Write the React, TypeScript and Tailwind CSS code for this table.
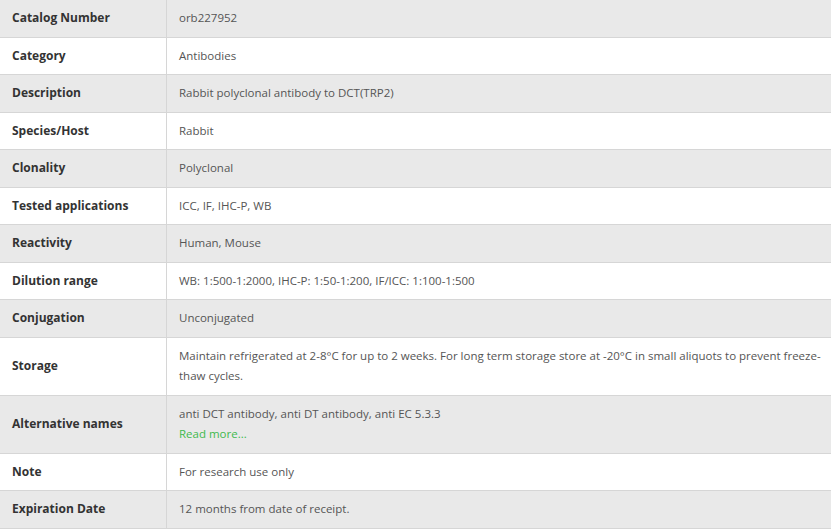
import * as React from "react"

type Spec = {
    label: string
    value: React.ReactNode
}

const specs: Spec[] = [
    { label: "Catalog Number", value: "orb227952" },
    { label: "Category", value: "Antibodies" },
    { label: "Description", value: "Rabbit polyclonal antibody to DCT(TRP2)" },
    { label: "Species/Host", value: "Rabbit" },
    { label: "Clonality", value: "Polyclonal" },
    { label: "Tested applications", value: "ICC, IF, IHC-P, WB" },
    { label: "Reactivity", value: "Human, Mouse" },
    { label: "Dilution range", value: "WB: 1:500-1:2000, IHC-P: 1:50-1:200, IF/ICC: 1:100-1:500" },
    { label: "Conjugation", value: "Unconjugated" },
    {
        label: "Storage",
        value: "Maintain refrigerated at 2-8°C for up to 2 weeks. For long term storage store at -20°C in small aliquots to prevent freeze-thaw cycles.",
    },
    {
        label: "Alternative names",
        value: (
            <>
                <div>anti DCT antibody, anti DT antibody, anti EC 5.3.3</div>
                <a href="#" className="text-[#3fb94e]">Read more...</a>
            </>
        ),
    },
    { label: "Note", value: "For research use only" },
    { label: "Expiration Date", value: "12 months from date of receipt." },
]

export default function App() {
    return (
        <div className="w-[831px] h-[529px] overflow-hidden bg-white font-['Open_Sans',sans-serif]">
            {specs.map((row, i) => (
                <div
                    key={row.label}
                    className={`flex border-b border-[#d6d6d6] ${i % 2 === 0 ? "bg-[#e9e9e9]" : "bg-white"}`}
                >
                    <div className="w-[167px] shrink-0 flex items-center border-r border-[#d6d6d6] px-3 py-2 text-[12px] font-bold leading-[20.5px] text-[#333]">
                        {row.label}
                    </div>
                    <div className="flex-1 pl-3 pr-1 py-2 text-[11.5px] leading-[20.5px] text-[#555]">
                        {row.value}
                    </div>
                </div>
            ))}
        </div>
    )
}
